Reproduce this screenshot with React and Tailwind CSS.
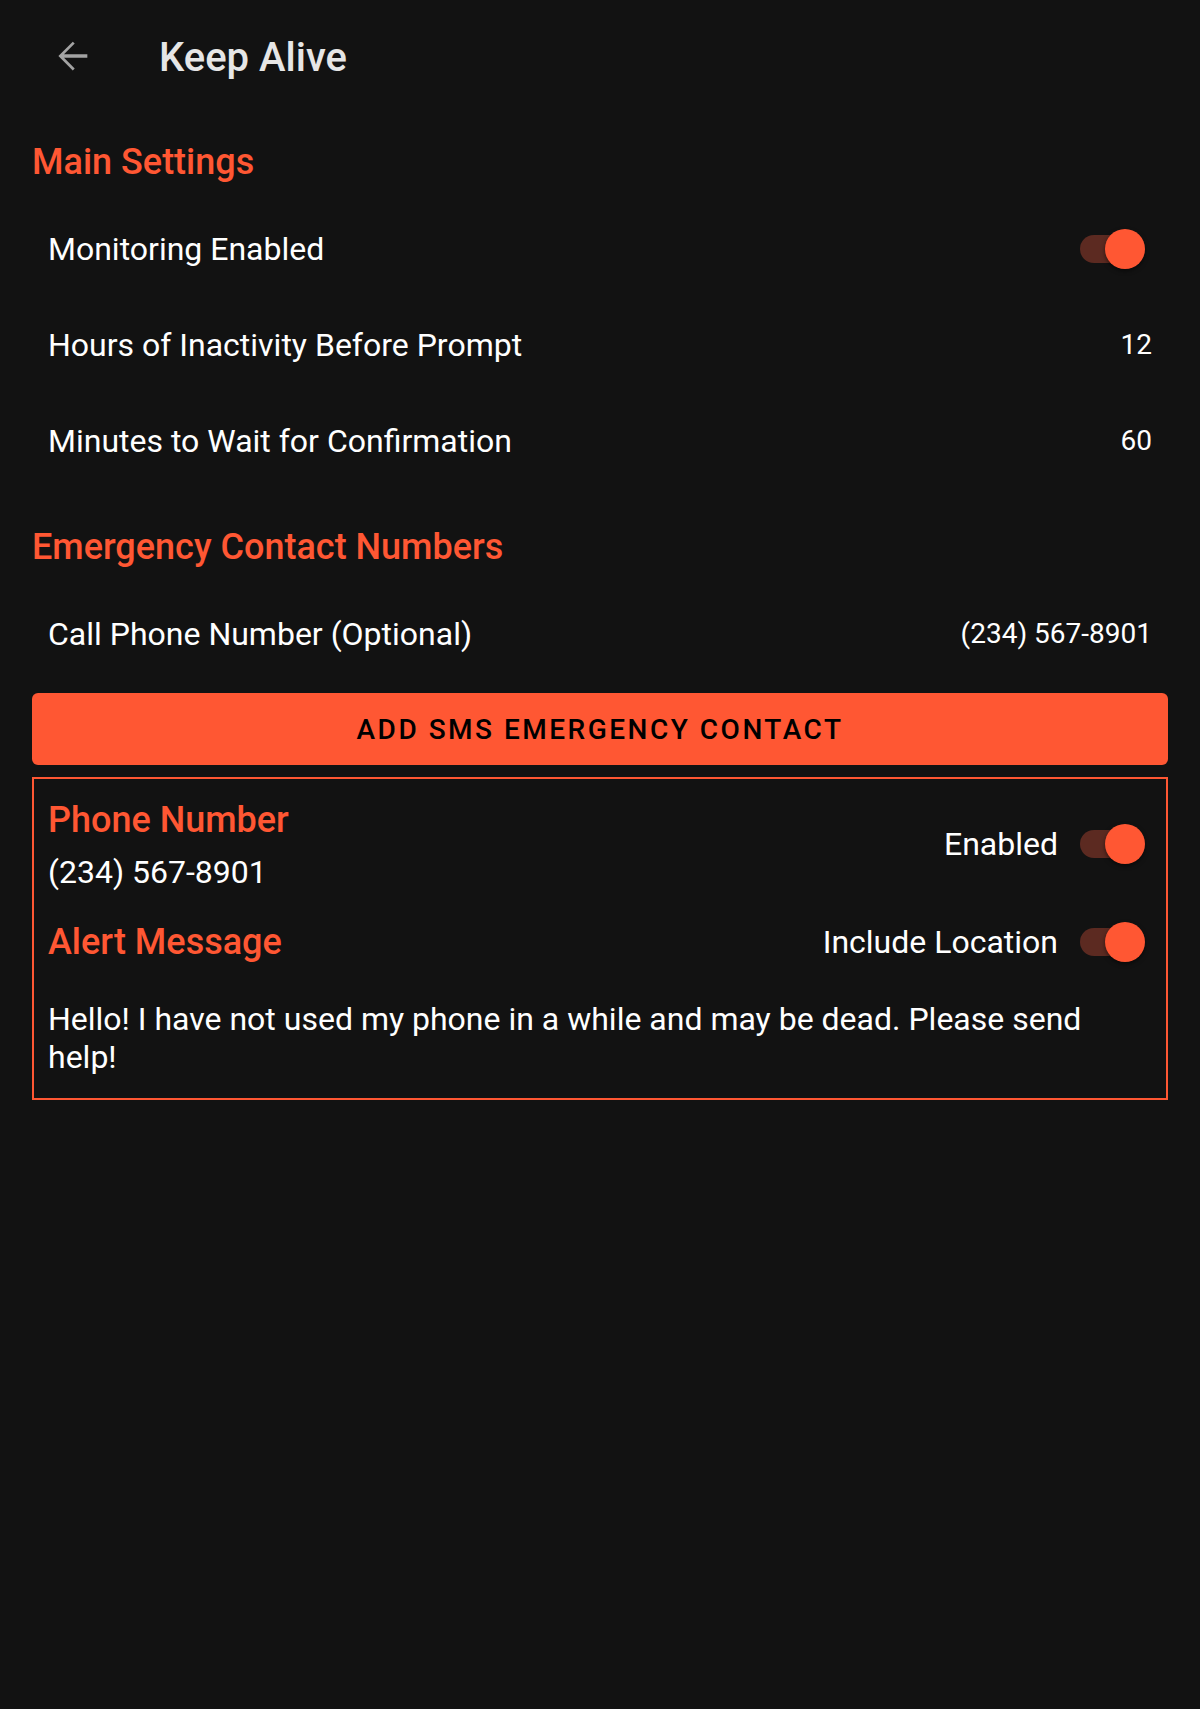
import React from 'react';

const ACCENT = 'text-[#ff5733]';

function Toggle() {
  return (
    <div className="relative w-[65px] h-10 mr-[7px] shrink-0">
      <div className="absolute left-0 top-[6px] w-[62px] h-[28px] rounded-full bg-[#5c2a21]" />
      <div className="absolute left-[25px] top-0 w-10 h-10 rounded-full bg-[#ff5733] shadow-[0_2px_4px_rgba(0,0,0,0.5)]" />
    </div>
  );
}

function SectionTitle({ children, className = '' }) {
  return (
    <h2 className={`text-[36px] leading-[44px] font-medium ${ACCENT} ${className}`}>
      {children}
    </h2>
  );
}

function SettingRow({ label, children }) {
  return (
    <div className="h-[96px] px-4 flex items-center justify-between">
      <span className="text-[32px] leading-[38px] text-white">{label}</span>
      {children}
    </div>
  );
}

function Value({ children }) {
  return <span className="text-[28px] leading-[34px] text-white">{children}</span>;
}

export default function App() {
  return (
    <div className="min-h-screen bg-[#121212] font-[Roboto,sans-serif]">
      {/* Toolbar */}
      <header className="h-[112px] flex items-center pl-[49px]">
        <svg width="46" height="46" viewBox="0 0 24 24" className="text-[#a3a3a3]">
          <path
            fill="currentColor"
            d="M20 11.1H7.83l5.59-5.59L12.4 4.5 4.9 12l7.5 7.5 1.02-1.01-5.59-5.59H20v-1.8z"
          />
        </svg>
        <h1 className="ml-[64px] mt-[4px] text-[40px] leading-[48px] font-medium text-[#e6e6e6]">Keep Alive</h1>
      </header>

      <main className="px-8">
        {/* Main settings */}
        <SectionTitle className="pt-[28px] pb-[17px]">Main Settings</SectionTitle>
        <SettingRow label="Monitoring Enabled">
          <Toggle />
        </SettingRow>
        <SettingRow label="Hours of Inactivity Before Prompt">
          <Value>12</Value>
        </SettingRow>
        <SettingRow label="Minutes to Wait for Confirmation">
          <Value>60</Value>
        </SettingRow>

        {/* Emergency contacts */}
        <SectionTitle className="pt-[36px] pb-[17px]">Emergency Contact Numbers</SectionTitle>
        <SettingRow label="Call Phone Number (Optional)">
          <Value>(234) 567-8901</Value>
        </SettingRow>

        <button className="mt-[11px] w-full h-[72px] rounded-[6px] bg-[#ff5733] text-black text-[28px] font-medium tracking-[2.5px] pt-[2px] flex items-center justify-center">
          ADD SMS EMERGENCY CONTACT
        </button>

        <div className="mt-3 border-2 border-[#ff5733] px-[14px] pt-[19px] pb-[22px]">
          <div className="flex items-center justify-between">
            <div>
              <SectionTitle>Phone Number</SectionTitle>
              <div className="mt-[11px] text-[32px] leading-[38px] text-white">(234) 567-8901</div>
            </div>
            <div className="flex items-center gap-[22px] -mt-[2px]">
              <span className="text-[32px] leading-[38px] text-white">Enabled</span>
              <Toggle />
            </div>
          </div>

          <div className="mt-[29px] flex items-center justify-between">
            <SectionTitle>Alert Message</SectionTitle>
            <div className="flex items-center gap-[22px]">
              <span className="text-[32px] leading-[38px] text-white">Include Location</span>
              <Toggle />
            </div>
          </div>

          <p className="mt-[36px] text-[32px] leading-[38px] text-white">
            Hello! I have not used my phone in a while and may be dead. Please send help!
          </p>
        </div>
      </main>
    </div>
  );
}
